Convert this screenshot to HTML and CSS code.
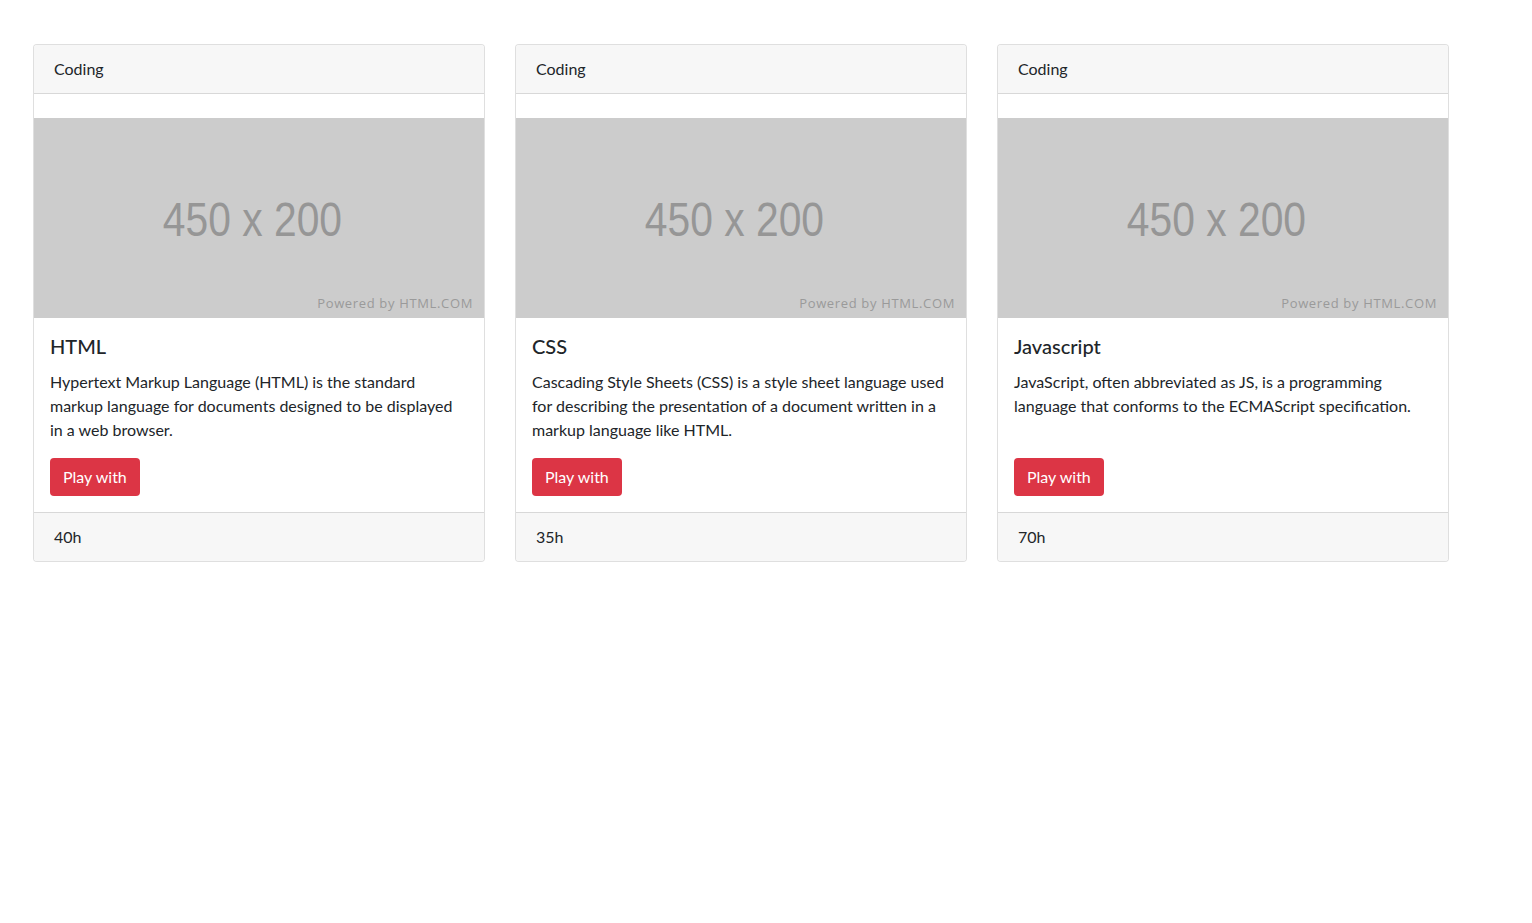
FILE: index.html
```html
<!DOCTYPE html>
<html lang="en">
<head>
<meta charset="utf-8">
<title>Coding cards</title>
<link rel="stylesheet" href="styles.css">
</head>
<body>
<div class="container">
  <div class="card">
    <div class="card-header">Coding</div>
    <div class="placeholder">
      <span class="ph-size">450 x 200</span>
      <span class="ph-powered">Powered by HTML.COM</span>
    </div>
    <div class="card-body">
      <h5 class="card-title">HTML</h5>
      <p class="card-text">Hypertext Markup Language (HTML) is the standard markup language for documents designed to be displayed in a web browser.</p>
      <a class="btn" href="#">Play with</a>
    </div>
    <div class="card-footer">40h</div>
  </div>
  <div class="card">
    <div class="card-header">Coding</div>
    <div class="placeholder">
      <span class="ph-size">450 x 200</span>
      <span class="ph-powered">Powered by HTML.COM</span>
    </div>
    <div class="card-body">
      <h5 class="card-title">CSS</h5>
      <p class="card-text">Cascading Style Sheets (CSS) is a style sheet language used for describing the presentation of a document written in a markup language like HTML.</p>
      <a class="btn" href="#">Play with</a>
    </div>
    <div class="card-footer">35h</div>
  </div>
  <div class="card">
    <div class="card-header">Coding</div>
    <div class="placeholder">
      <span class="ph-size">450 x 200</span>
      <span class="ph-powered">Powered by HTML.COM</span>
    </div>
    <div class="card-body">
      <h5 class="card-title">Javascript</h5>
      <p class="card-text">JavaScript, often abbreviated as JS, is a programming language that conforms to the ECMAScript specification.</p>
      <a class="btn" href="#">Play with</a>
    </div>
    <div class="card-footer">70h</div>
  </div>
</div>
</body>
</html>
```

FILE: styles.css
```css
* { box-sizing: border-box; }
body {
  margin: 0;
  font-family: "Lato", "Noto Sans", sans-serif;
  font-size: 16px;
  line-height: 24px;
  color: #212529;
  background: #fff;
}
.container {
  display: flex;
  align-items: stretch;
  gap: 30px;
  padding: 44px 0 0 33px;
}
.card {
  width: 452px;
  display: flex;
  flex-direction: column;
  border: 1px solid rgba(0,0,0,.125);
  border-radius: 4px;
  background: #fff;
}
.card-header {
  padding: 12px 20px;
  background: #f7f7f7;
  border-bottom: 1px solid rgba(0,0,0,.125);
  border-radius: 3px 3px 0 0;
}
.placeholder {
  margin-top: 24px;
  height: 200px;
  background: #cccccc;
  position: relative;
  display: flex;
  align-items: center;
  justify-content: center;
}
.ph-size {
  font-family: "Liberation Sans", Arial, sans-serif;
  font-size: 48px;
  line-height: 1;
  color: #969696;
  margin-left: -14px;
  margin-top: 4px;
  transform: scaleX(0.85);
}
.ph-powered {
  position: absolute;
  right: 11px;
  bottom: 7px;
  font-family: "Open Sans", sans-serif;
  font-size: 13px;
  line-height: 16px;
  letter-spacing: 0.65px;
  color: #9a9a9a;
}
.card-body {
  flex: 1;
  padding: 16px;
  display: flex;
  flex-direction: column;
  align-items: flex-start;
}
.card-title {
  margin: 0 0 12px;
  font-size: 20px;
  line-height: 24px;
  font-weight: 500;
}
.card-text {
  margin: 0 0 16px;
  flex: 1;
}
.btn {
  display: inline-block;
  padding: 7px 13px;
  background: #dc3545;
  color: #fff;
  text-decoration: none;
  border-radius: 4px;
  font-size: 16px;
  line-height: 24px;
}
.card-footer {
  padding: 12px 20px;
  background: #f7f7f7;
  border-top: 1px solid rgba(0,0,0,.125);
  border-radius: 0 0 3px 3px;
}
```
